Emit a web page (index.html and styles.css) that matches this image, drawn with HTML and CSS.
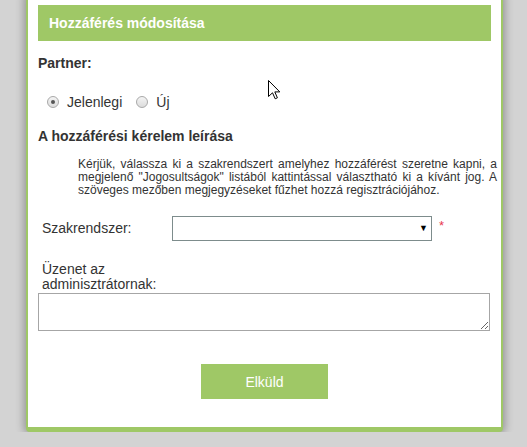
FILE: index.html
```html
<!DOCTYPE html>
<html lang="hu">
<head>
    <meta charset="UTF-8">
    <meta name="viewport" content="width=device-width, initial-scale=1.0">
    <link rel="stylesheet" href="styles.css">
    <title>Hozzáférés módosítása</title>
</head>
<body>
    <div class="dialog">
        <div class="dialog-header">Hozzáférés módosítása</div>
        <div class="dialog-body">
            <div class="field-title">Partner:</div>
            <div class="radio-row">
                <label class="radio"><input type="radio" name="partner" checked>Jelenlegi</label>
                <label class="radio radio-new"><input type="radio" name="partner">Új</label>
            </div>
            <h3 class="section-title">A hozzáférési kérelem leírása</h3>
            <p class="hint">Kérjük, válassza ki a szakrendszert amelyhez hozzáférést szeretne kapni, a megjelenő "Jogosultságok" listából kattintással választható ki a kívánt jog. A szöveges mezőben megjegyzéseket fűzhet hozzá regisztrációjához.</p>
            <div class="form-row">
                <label class="form-label" for="system">Szakrendszer:</label>
                <div class="select-wrap">
                    <select id="system"></select>
                    <span class="select-arrow">&#9660;</span>
                </div>
                <span class="required">*</span>
            </div>
            <div class="message-field">
                <label class="form-label" for="message">Üzenet az adminisztrátornak:</label>
                <textarea id="message"></textarea>
            </div>
            <div class="actions">
                <button type="button" class="send">Elküld</button>
            </div>
        </div>
    </div>
    <svg class="cursor" width="13" height="20" viewBox="0 0 13 20">
        <path d="M0.5 0.5 L0.5 16.5 L4.5 12.8 L7.2 18.8 L9.4 17.8 L6.8 11.9 L11.8 11.9 Z" fill="#fff" stroke="#000" stroke-width="1"/>
    </svg>
</body>
</html>
```

FILE: styles.css
```css
* {
    margin: 0;
    padding: 0;
    box-sizing: border-box;
}
body {
    background: #d3d3d3;
    font-family: "Liberation Sans", Arial, sans-serif;
    color: #333;
    font-size: 14px;
    overflow: hidden;
}
.dialog {
    width: 477px;
    margin: -7px 0 0 26px;
    background: #fff;
    border: 2px solid #9fc866;
    border-bottom-width: 5px;
    border-radius: 4px;
    padding: 10px 10px 0;
    box-shadow: 0 0 9px 2px rgba(0, 0, 0, 0.3);
}
.dialog-header {
    height: 36px;
    line-height: 36px;
    padding: 0 11px;
    background: #9fc866;
    color: #fff;
    font-weight: bold;
    font-size: 14px;
}
.field-title {
    margin-top: 14px;
    line-height: 16px;
    font-weight: bold;
}
.radio-row {
    margin-top: 23px;
    display: flex;
    align-items: center;
    line-height: 16px;
}
.radio {
    display: flex;
    align-items: center;
}
.radio input {
    appearance: none;
    -webkit-appearance: none;
    width: 12px;
    height: 12px;
    margin: 0 8px 0 9px;
    border: 1px solid #a9a9a9;
    border-radius: 50%;
    background: linear-gradient(#f4f4f4, #dcdcdc);
    position: relative;
}
.radio input:checked::after {
    content: "";
    position: absolute;
    left: 3px;
    top: 3px;
    width: 4px;
    height: 4px;
    border-radius: 50%;
    background: #555;
}
.radio-new input {
    margin-left: 14px;
}
.section-title {
    margin-top: 18px;
    font-size: 14px;
    line-height: 16px;
    font-weight: bold;
}
.hint {
    margin: 14px -6px 0 40px;
    font-size: 12px;
    line-height: 13px;
    text-align: justify;
}
.form-row {
    margin-top: 19px;
    display: flex;
    align-items: center;
}
.form-label {
    display: block;
    width: 134px;
    padding-left: 4px;
    line-height: 15px;
}
.select-wrap {
    position: relative;
    width: 260px;
    height: 25px;
}
.select-wrap select {
    appearance: none;
    -webkit-appearance: none;
    width: 100%;
    height: 100%;
    border: 1px solid #7d8c8c;
    background: #fff;
    border-radius: 0;
    font-family: inherit;
}
.select-arrow {
    position: absolute;
    right: 4px;
    top: 7px;
    font-size: 9px;
    line-height: 10px;
    color: #000;
}
.required {
    margin-left: 7px;
    margin-bottom: 6px;
    color: #e8374f;
    font-size: 13px;
}
.message-field {
    margin-top: 21px;
}
.message-field textarea {
    display: block;
    width: 452px;
    height: 38px;
    margin-top: 1px;
    border: 1px solid #a6a6a6;
    resize: both;
    font-family: inherit;
}
.actions {
    display: flex;
    justify-content: center;
    padding: 33px 0 28px;
}
.send {
    width: 127px;
    height: 35px;
    border: none;
    background: #9fc866;
    color: #fff;
    font-family: inherit;
    font-size: 14px;
    cursor: pointer;
}
.cursor {
    position: absolute;
    left: 268px;
    top: 80px;
}
```
